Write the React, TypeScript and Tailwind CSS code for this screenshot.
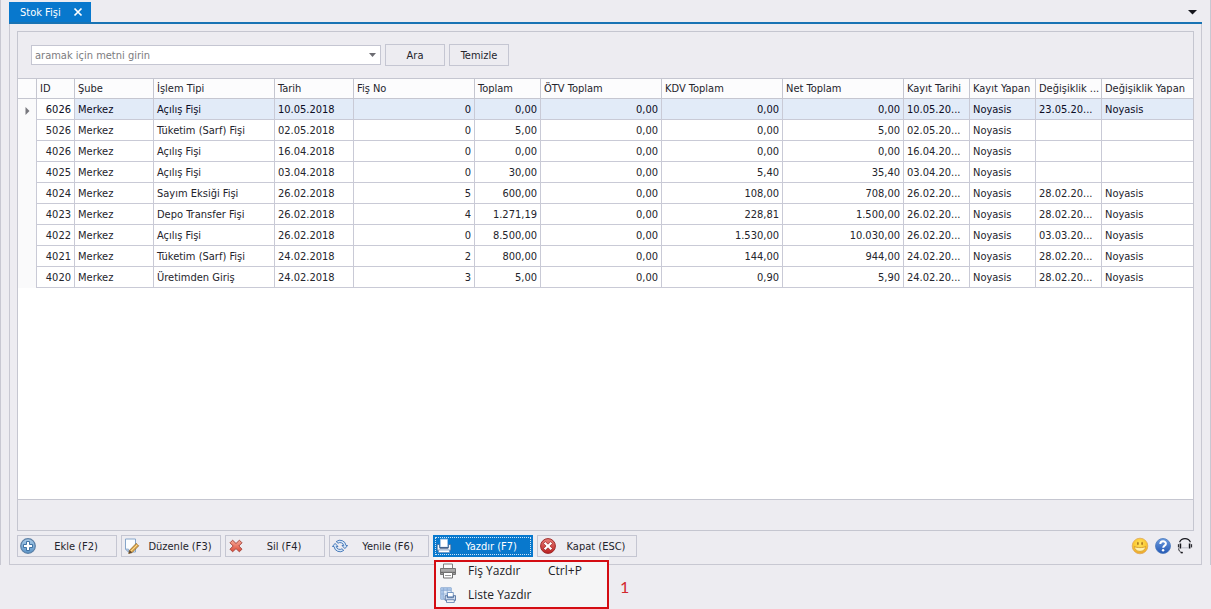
import type { ReactNode } from "react";

type Row = {
  id: string;
  type: string;
  date: string;
  no: string;
  total: string;
  otv: string;
  kdv: string;
  net: string;
  created: string;
  changed: string;
  changedBy: string;
};

const rows: Row[] = [
  { id: "6026", type: "Açılış Fişi", date: "10.05.2018", no: "0", total: "0,00", otv: "0,00", kdv: "0,00", net: "0,00", created: "10.05.20...", changed: "23.05.20...", changedBy: "Noyasis" },
  { id: "5026", type: "Tüketim (Sarf) Fişi", date: "02.05.2018", no: "0", total: "5,00", otv: "0,00", kdv: "0,00", net: "5,00", created: "02.05.20...", changed: "", changedBy: "" },
  { id: "4026", type: "Açılış Fişi", date: "16.04.2018", no: "0", total: "0,00", otv: "0,00", kdv: "0,00", net: "0,00", created: "16.04.20...", changed: "", changedBy: "" },
  { id: "4025", type: "Açılış Fişi", date: "03.04.2018", no: "0", total: "30,00", otv: "0,00", kdv: "5,40", net: "35,40", created: "03.04.20...", changed: "", changedBy: "" },
  { id: "4024", type: "Sayım Eksiği Fişi", date: "26.02.2018", no: "5", total: "600,00", otv: "0,00", kdv: "108,00", net: "708,00", created: "26.02.20...", changed: "28.02.20...", changedBy: "Noyasis" },
  { id: "4023", type: "Depo Transfer Fişi", date: "26.02.2018", no: "4", total: "1.271,19", otv: "0,00", kdv: "228,81", net: "1.500,00", created: "26.02.20...", changed: "28.02.20...", changedBy: "Noyasis" },
  { id: "4022", type: "Açılış Fişi", date: "26.02.2018", no: "0", total: "8.500,00", otv: "0,00", kdv: "1.530,00", net: "10.030,00", created: "26.02.20...", changed: "03.03.20...", changedBy: "Noyasis" },
  { id: "4021", type: "Tüketim (Sarf) Fişi", date: "24.02.2018", no: "2", total: "800,00", otv: "0,00", kdv: "144,00", net: "944,00", created: "24.02.20...", changed: "28.02.20...", changedBy: "Noyasis" },
  { id: "4020", type: "Üretimden Giriş", date: "24.02.2018", no: "3", total: "5,00", otv: "0,00", kdv: "0,90", net: "5,90", created: "24.02.20...", changed: "28.02.20...", changedBy: "Noyasis" },
];

const columns: { label: string; width: string }[] = [
  { label: "ID", width: "w-[38px]" },
  { label: "Şube", width: "w-[79px]" },
  { label: "İşlem Tipi", width: "w-[121px]" },
  { label: "Tarih", width: "w-[79px]" },
  { label: "Fiş No", width: "w-[121px]" },
  { label: "Toplam", width: "w-[66px]" },
  { label: "ÖTV Toplam", width: "w-[121px]" },
  { label: "KDV Toplam", width: "w-[121px]" },
  { label: "Net Toplam", width: "w-[121px]" },
  { label: "Kayıt Tarihi", width: "w-[66px]" },
  { label: "Kayıt Yapan", width: "w-[66px]" },
  { label: "Değişiklik ...", width: "w-[66px]" },
  { label: "Değişiklik Yapan", width: "" },
];

function AddIcon() {
  return (
    <svg width="16" height="16" viewBox="0 0 16 16" aria-hidden="true">
      <defs>
        <linearGradient id="addFill" x1="0" y1="0" x2="0" y2="1">
          <stop offset="0" stopColor="#a9cbe8" />
          <stop offset="1" stopColor="#5b94c8" />
        </linearGradient>
      </defs>
      <circle cx="8" cy="8" r="7.3" fill="url(#addFill)" stroke="#5b7fa6" strokeWidth="1.2" />
      <path d="M6.5 3.500h3v3h3v3h-3v3h-3v-3h-3v-3h3z" fill="#fff" stroke="#31689c" strokeWidth="0.9" />
    </svg>
  );
}

function EditIcon() {
  return (
    <svg width="16" height="16" viewBox="0 0 16 16" aria-hidden="true">
      <path d="M1.500 1h10v13h-7l-3-3z" fill="#fbfdff" stroke="#86a5c9" />
      <path d="M1.500 11h3v3z" fill="#b8cde6" stroke="#86a5c9" strokeWidth="0.7" />
      <path d="M5.600 12.200l6.600-6.800 2.500 2.400-6.600 6.800-3.400.9z" fill="#e2aa4c" stroke="#8d6428" strokeWidth="0.8" />
      <path d="M6.800 13.300l6.600-6.700" stroke="#fbe2a4" strokeWidth="0.9" />
      <path d="M4.700 15.500l.9-3.300 2.500 2.400z" fill="#5a4636" />
    </svg>
  );
}

function DeleteIcon() {
  return (
    <svg width="16" height="16" viewBox="0 0 16 16" aria-hidden="true">
      <defs>
        <linearGradient id="deleteFill" x1="0" y1="0" x2="0" y2="1">
          <stop offset="0" stopColor="#f7ab98" />
          <stop offset="1" stopColor="#dc4a38" />
        </linearGradient>
      </defs>
      <path d="M4.600 2.200L8 5.500l3.400-3.300 2.600 2.600L10.800 8l3.200 3.200-2.600 2.600L8 10.600l-3.400 3.200L2 11.200 5.200 8 2 4.800z" fill="url(#deleteFill)" stroke="#a8483f" strokeWidth="1" strokeLinejoin="round" />
    </svg>
  );
}

function RefreshIcon() {
  return (
    <svg width="16" height="16" viewBox="0 0 16 16" aria-hidden="true">
      <g fill="#d5e6f7" stroke="#3c70b4" strokeWidth="0.9" strokeLinejoin="round">
        <path d="M4.200 3.600A6 6 0 0 1 14 7.500h1.600L12.900 10.600 10 7.500h1.700A3.700 3.700 0 0 0 6 5.200Z" />
        <path d="M11.800 12.400A6 6 0 0 1 2 8.500H.4L3.100 5.400 6 8.500H4.300A3.700 3.700 0 0 0 10 10.800Z" />
      </g>
    </svg>
  );
}

function PrintColorIcon() {
  return (
    <svg width="16" height="16" viewBox="0 0 16 16" aria-hidden="true">
      <path d="M4.500 1.200h7v8h-7z" fill="#fff" stroke="#a9c9e8" strokeWidth="0.8" />
      <path d="M1.200 6.500h2.300v3.200h9V6.500h2.300v5.800H1.200z" fill="#f2f6fb" stroke="#3d5f8c" strokeWidth="0.7" />
      <path d="M3.800 10h8.400" stroke="#2f4b74" strokeWidth="1.200" />
      <path d="M2.500 12h11v2.500h-11z" fill="#fff" stroke="#6a8fbd" strokeWidth="0.7" />
    </svg>
  );
}

function CloseIcon() {
  return (
    <svg width="16" height="16" viewBox="0 0 16 16" aria-hidden="true">
      <defs>
        <linearGradient id="closeFill" x1="0" y1="0" x2="0" y2="1">
          <stop offset="0" stopColor="#e98079" />
          <stop offset="1" stopColor="#ba1f1f" />
        </linearGradient>
      </defs>
      <circle cx="8" cy="8" r="7.400" fill="url(#closeFill)" stroke="#9f2a2a" />
      <path d="M5.400 3.700L8 6.200l2.600-2.500 1.800 1.800L9.900 8l2.500 2.500-1.800 1.800L8 9.800l-2.600 2.500-1.800-1.800L6.100 8 3.600 5.500z" fill="#fff" stroke="#8e1b1b" strokeWidth="0.6" />
    </svg>
  );
}

function PrinterIcon() {
  return (
    <svg width="16" height="16" viewBox="0 0 16 16" aria-hidden="true">
      <path d="M3.500 6V1h9v5" fill="#fafafa" stroke="#7d7d7d" />
      <path d="M.5 5.500h15v6H.5z" fill="#a9a9a9" stroke="#757575" />
      <path d="M1 9.500h14" stroke="#696969" strokeWidth="1.400" />
      <path d="M3.500 9.500h9v5.500h-9z" fill="#fff" stroke="#6f6f6f" />
      <path d="M5 12.500h6" stroke="#9a9a9a" />
    </svg>
  );
}

function PrintListIcon() {
  return (
    <svg width="16" height="16" viewBox="0 0 16 16" aria-hidden="true">
      <path d="M.8.8h10.400v11.400H.8z" fill="#e3edf9" stroke="#86a6d0" />
      <path d="M1 1h10v2.200H1zM1 1h2.400v11H1z" fill="#a9c4e6" />
      <path d="M3.600 1v11M7.200 1v11M1 3.400h10M1 7h10" stroke="#86a6d0" strokeWidth="0.7" />
      <path d="M7.500 5.500h5.800v4.300H7.500z" fill="#fff" stroke="#5b82b4" strokeWidth="0.8" />
      <path d="M5.200 8.700h2.200v2h6V8.700h2.200v4.600H5.200z" fill="#d3e0f1" stroke="#3a5c8e" strokeWidth="0.8" />
      <path d="M6.500 12.800h7.800v2.600H6.500z" fill="#fff" stroke="#4b6fa2" strokeWidth="0.8" />
    </svg>
  );
}

function SmileIcon() {
  return (
    <svg width="18" height="18" viewBox="0 0 18 18" aria-hidden="true">
      <defs>
        <radialGradient id="smileFill" cx="0.5" cy="0.35" r="0.65">
          <stop offset="0" stopColor="#ffe45c" />
          <stop offset="0.7" stopColor="#fac42c" />
          <stop offset="1" stopColor="#e9a02a" />
        </radialGradient>
      </defs>
      <circle cx="9" cy="9" r="7.800" fill="url(#smileFill)" stroke="#e0a95c" strokeWidth="0.8" />
      <ellipse cx="6.900" cy="6.500" rx="0.800" ry="1.800" fill="#a8741c" />
      <ellipse cx="11.100" cy="6.500" rx="0.800" ry="1.800" fill="#a8741c" />
      <path d="M3.400 9.400c1.600 1.600 9.600 1.600 11.200 0-.2 3.200-2.500 5-5.600 5S3.600 12.600 3.400 9.400z" fill="#fff3b0" stroke="#cf952a" strokeWidth="0.8" />
    </svg>
  );
}

function HelpIcon() {
  return (
    <svg width="18" height="18" viewBox="0 0 18 18" aria-hidden="true">
      <defs>
        <linearGradient id="helpFill" x1="0" y1="0" x2="0" y2="1">
          <stop offset="0" stopColor="#6c9ce0" />
          <stop offset="1" stopColor="#2458b4" />
        </linearGradient>
      </defs>
      <circle cx="9" cy="9" r="7.500" fill="url(#helpFill)" stroke="#4a78bd" strokeWidth="0.8" />
      <path d="M6.300 7.100c0-3.700 5.600-3.500 5.600-.4 0 1.900-2.700 2-2.700 4" fill="none" stroke="#fff" strokeWidth="2" />
      <circle cx="9.100" cy="13.200" r="1.200" fill="#fff" />
    </svg>
  );
}

function HeadsetIcon() {
  return (
    <svg width="16" height="18" viewBox="0 0 16 18" fill="none" stroke="#16161c" aria-hidden="true">
      <path d="M2.600 5.200C3.600 2.600 5.400 1.600 8 1.600s4.400 1 5.400 3.600" strokeWidth="1.200" />
      <path d="M3.400 6.600v4.800M12.600 6.600v4.800" strokeWidth="1.600" />
      <path d="M1.400 7.200v3.200M14.600 7.200v3.200" strokeWidth="1" />
      <path d="M1.600 11.400c.2 2.400 1.200 3.600 3 4" strokeWidth="0.900" />
      <path d="M3.800 15.600h2" strokeWidth="1.500" />
      <path d="M4.500 10.800h7" stroke="#a9a9b4" strokeWidth="0.700" />
    </svg>
  );
}

function ActionButton({ icon, label }: { icon: ReactNode; label: string }) {
  return (
    <button type="button" className="flex h-[22px] w-[100px] items-center border border-[#c5c6d2] bg-[#edecf1] pl-[2px]">
      {icon}
      <span className="flex-1 pt-px text-center">{label}</span>
    </button>
  );
}

export default function App() {
  return (
    <div className="flex min-h-screen flex-col bg-[#edecf1] pb-11 font-['DejaVu_Sans_Condensed','Noto_Sans',sans-serif] text-[11px] leading-4 text-[#24242c]">
      <div className="flex flex-1 flex-col border-x border-[#c8c8d2] px-2 pt-0.5">
        <div className="flex items-center justify-between">
          <div className="flex h-5 w-[82px] items-center justify-between bg-[#0878cd] pr-2 pl-[11px] text-white">
            <span className="pt-px">Stok Fişi</span>
            <button type="button" aria-label="Sekmeyi kapat">
              <svg width="10" height="10" viewBox="0 0 10 10" stroke="#fff" strokeWidth="1.700">
                <path d="M1.500 1.500l7 7M8.500 1.500l-7 7" />
              </svg>
            </button>
          </div>
          <button type="button" aria-label="Sekme listesi" className="pr-[5px]">
            <svg width="9" height="5" viewBox="0 0 9 5">
              <path d="M0 0h9L4.500 4.500z" fill="#15151c" />
            </svg>
          </button>
        </div>
        <div className="h-0.5 bg-[#1873b4]" />

        <main className="flex flex-1 flex-col gap-1 border-x border-b border-[#c8c8d2] p-[7px]">
          <section className="flex flex-1 flex-col border border-[#c5c6d0]">
            <form className="flex items-center gap-1 py-3 pl-[13px]" onSubmit={(e) => e.preventDefault()}>
              <div className="flex h-5 w-[350px] items-center border border-[#c5c6d2] bg-white pr-1">
                <input
                  type="text"
                  aria-label="Arama metni"
                  placeholder="aramak için metni girin"
                  className="min-w-0 flex-1 bg-transparent px-[3px] pt-px outline-none placeholder:text-[#7c7c80]"
                />
                <button type="button" aria-label="Arama geçmişi">
                  <svg width="7" height="4" viewBox="0 0 7 4">
                    <path d="M0 0h7L3.500 4z" fill="#6c6c72" />
                  </svg>
                </button>
              </div>
              <button type="submit" className="h-[22px] w-[60px] border border-[#c5c6d2] pt-px">Ara</button>
              <button type="reset" className="h-[22px] w-[60px] border border-[#c5c6d2] pt-px">Temizle</button>
            </form>

            <div className="flex-1 border-y border-[#c5c6d0] bg-white">
              <table className="w-full table-fixed border-separate border-spacing-0 whitespace-nowrap [&_td]:overflow-hidden [&_td]:border-r [&_td]:border-b [&_td]:border-[#c9cad6] [&_td]:px-[3px] [&_td]:pt-0.5 [&_td]:pb-0 [&_td:last-child]:border-r-0">
                <thead>
                  <tr className="h-5 bg-[#fcfcfd]">
                    <th className="w-[19px] border-r border-b border-[#c5c6d0] p-0" aria-label="Seçim" />
                    {columns.map((c) => (
                      <th
                        key={c.label}
                        className={`overflow-hidden border-r border-b border-[#c5c6d0] px-[3px] py-0 text-left font-normal last:border-r-0 ${c.width}`}
                      >
                        {c.label}
                      </th>
                    ))}
                  </tr>
                </thead>
                <tbody>
                  {rows.map((r, i) => (
                    <tr key={r.id} className={i === 0 ? "h-[21px] bg-[#e2ebf8] text-[#0c0c24]" : "h-[21px]"}>
                      <td className="border-b-0! bg-[#fafafb]">
                        {i === 0 && (
                          <svg width="5" height="8" viewBox="0 0 5 8" className="ml-1" aria-label="Seçili satır">
                            <path d="M0.500 0L4.500 4 0.500 8z" fill="#77777d" />
                          </svg>
                        )}
                      </td>
                      <td className="bg-white text-right">{r.id}</td>
                      <td>Merkez</td>
                      <td>{r.type}</td>
                      <td>{r.date}</td>
                      <td className="text-right">{r.no}</td>
                      <td className="text-right">{r.total}</td>
                      <td className="text-right">{r.otv}</td>
                      <td className="text-right">{r.kdv}</td>
                      <td className="text-right">{r.net}</td>
                      <td>{r.created}</td>
                      <td>Noyasis</td>
                      <td>{r.changed}</td>
                      <td>{r.changedBy}</td>
                    </tr>
                  ))}
                </tbody>
              </table>
            </div>
            <div className="h-[30px]" />
          </section>

          <div className="flex items-center justify-between">
            <div className="flex gap-1">
              <ActionButton icon={<AddIcon />} label="Ekle (F2)" />
              <ActionButton icon={<EditIcon />} label="Düzenle (F3)" />
              <ActionButton icon={<DeleteIcon />} label="Sil (F4)" />
              <ActionButton icon={<RefreshIcon />} label="Yenile (F6)" />
              <div className="relative">
                <button
                  type="button"
                  aria-haspopup="menu"
                  aria-expanded="true"
                  className="flex h-[22px] w-[100px] bg-[#0878cd] p-0.5 text-white"
                >
                  <span className="flex h-full flex-1 items-center border border-dotted border-[#cfe4f6]">
                    <PrintColorIcon />
                    <span className="flex-1 pt-px text-center">Yazdır (F7)</span>
                  </span>
                </button>
                <div className="absolute top-full left-px z-10 flex items-center bg-[#f5f5f6] pt-[3px]">
                  <ul role="menu" className="w-[175px] border-2 border-[#d40c12] font-['Open_Sans','Noto_Sans',sans-serif] text-[12px] text-[#222226]">
                    <li role="none">
                      <button type="button" role="menuitem" className="flex h-[21px] w-full items-center pb-1 pl-1">
                        <PrinterIcon />
                        <span className="ml-3 w-20 text-left">Fiş Yazdır</span>
                        <span>Ctrl+P</span>
                      </button>
                    </li>
                    <li role="none">
                      <button type="button" role="menuitem" className="flex h-6 w-full items-center pl-1">
                        <PrintListIcon />
                        <span className="ml-3">Liste Yazdır</span>
                      </button>
                    </li>
                  </ul>
                  <span className="absolute left-full ml-[11px] pt-1 font-['Lato',sans-serif] text-base text-[#d2282e]">1</span>
                </div>
              </div>
              <ActionButton icon={<CloseIcon />} label="Kapat (ESC)" />
            </div>
            <div className="flex items-center gap-[5px] pr-px">
              <button type="button" aria-label="Geri bildirim"><SmileIcon /></button>
              <button type="button" aria-label="Yardım"><HelpIcon /></button>
              <button type="button" aria-label="Canlı destek"><HeadsetIcon /></button>
            </div>
          </div>
        </main>
      </div>
    </div>
  );
}
